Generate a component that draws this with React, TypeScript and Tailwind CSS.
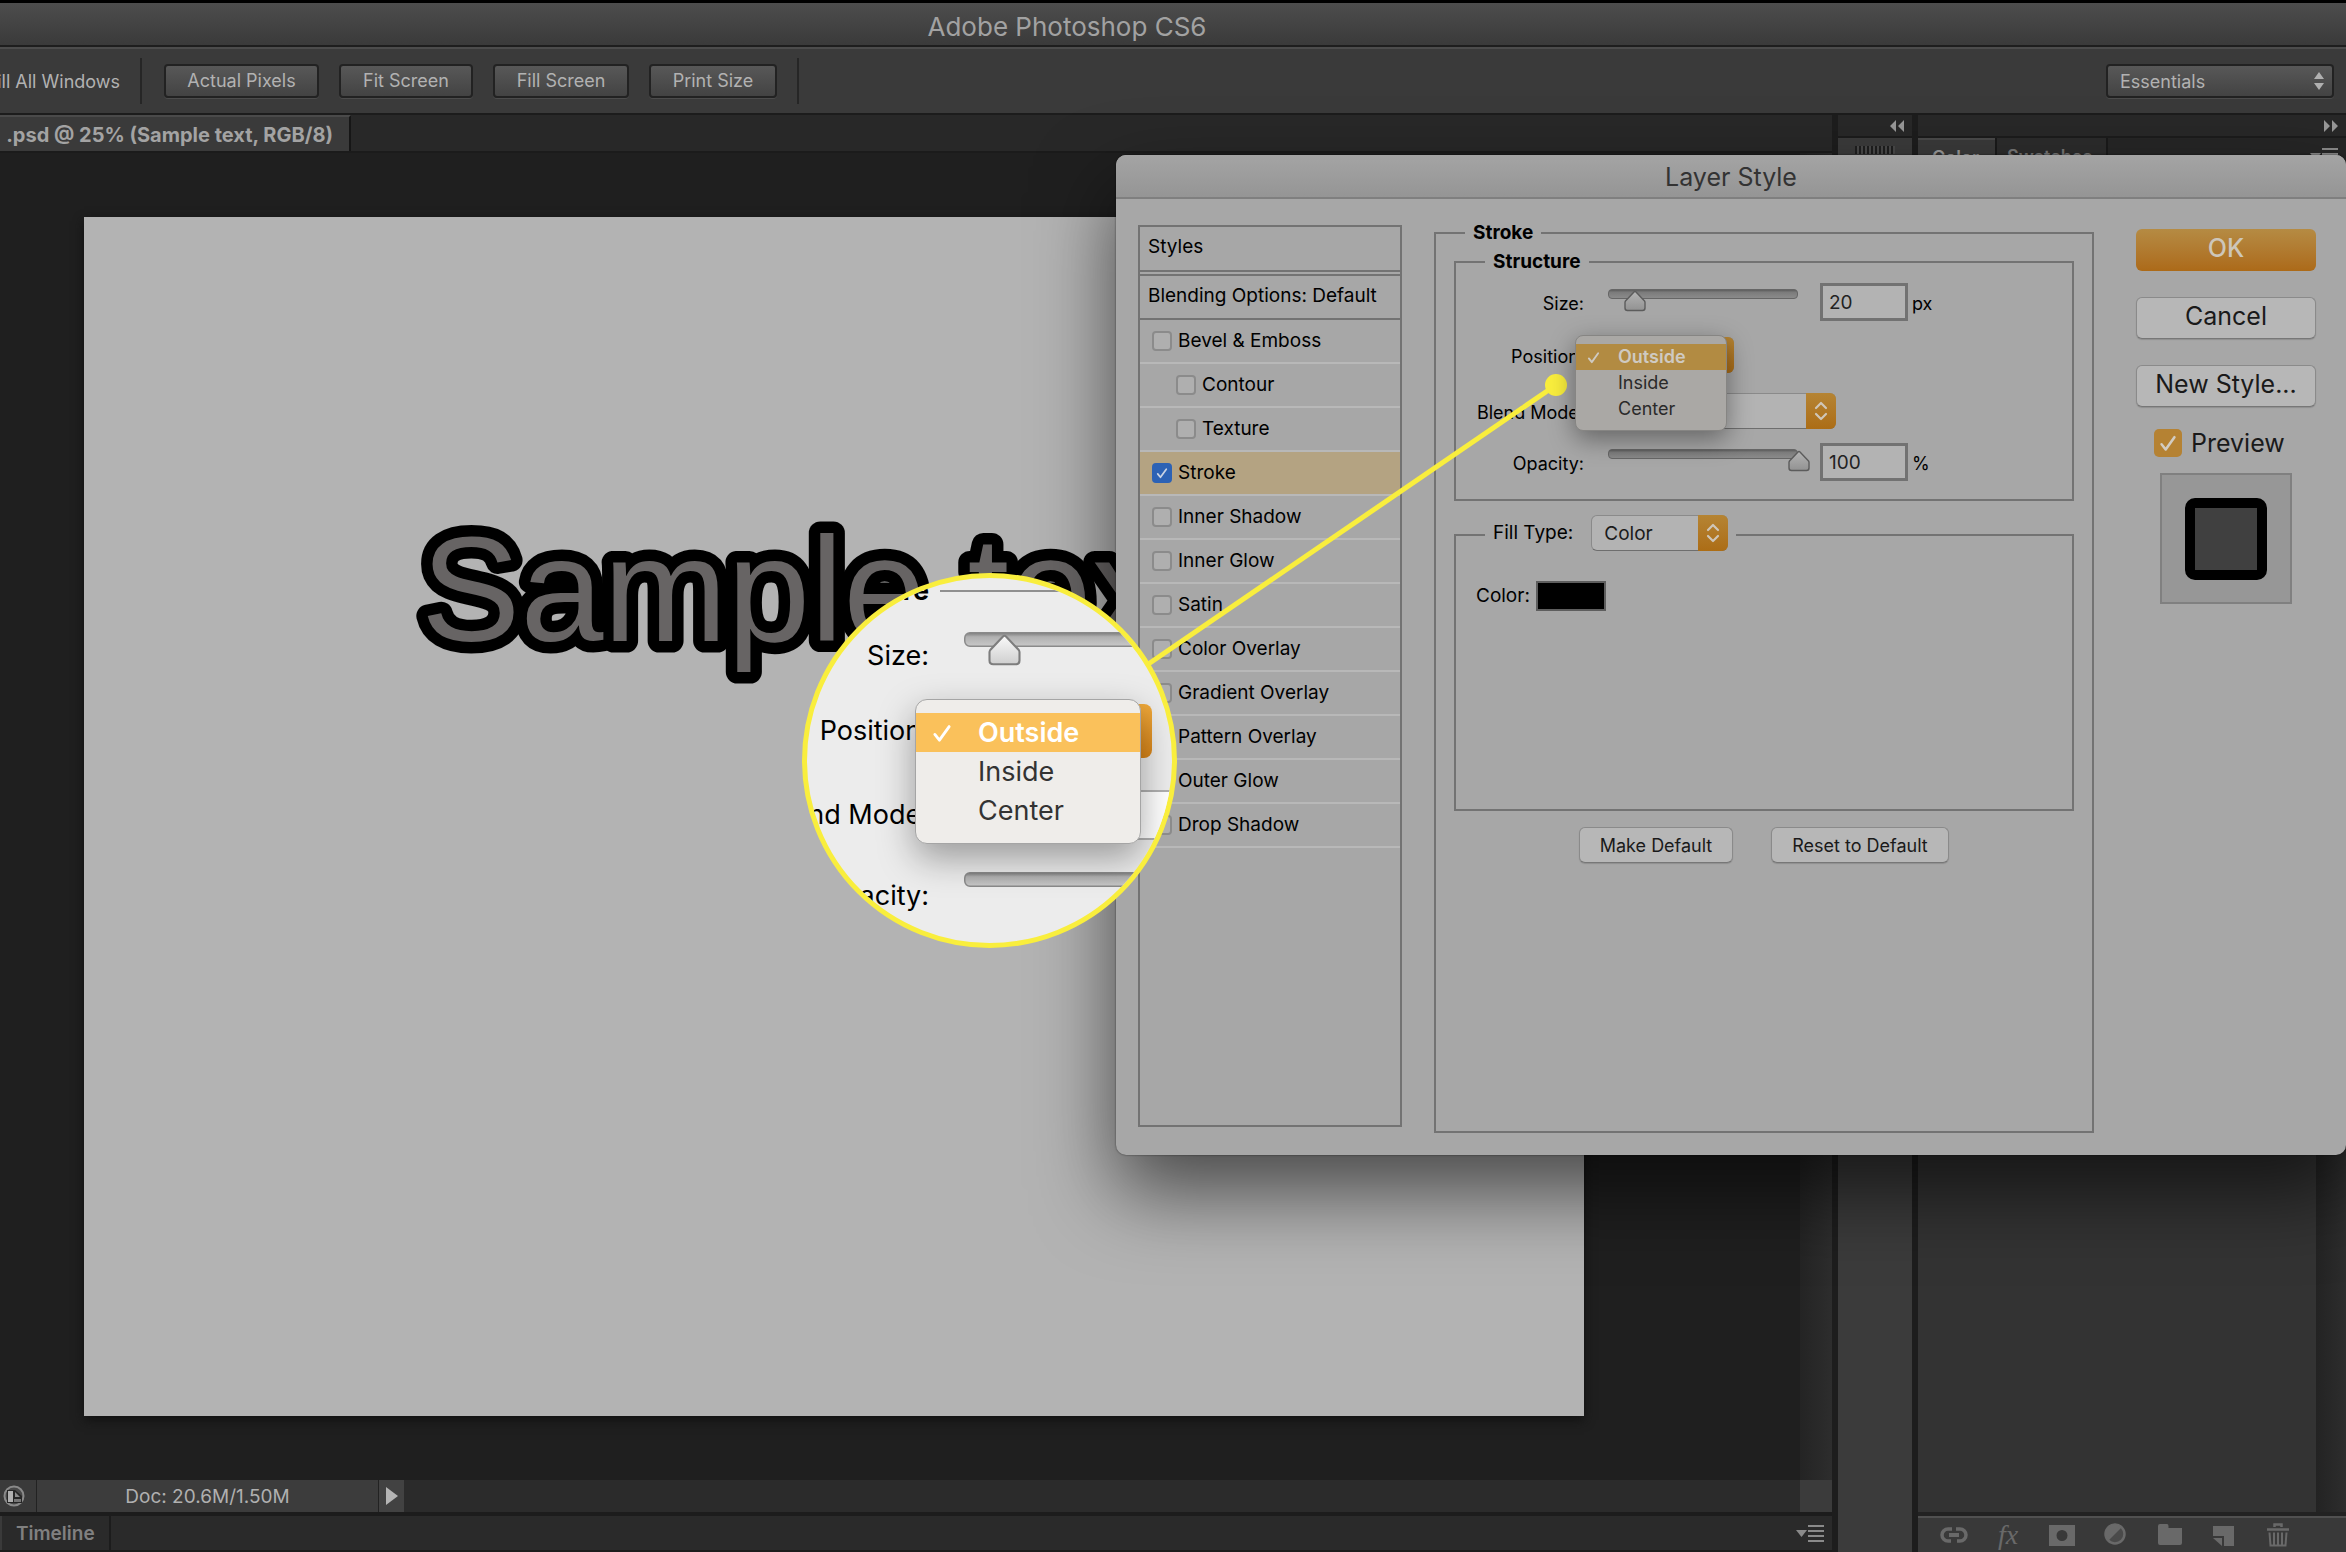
import { ComponentProps, ReactNode, useState } from "react";
import clsx from "clsx";

const VIEW_BUTTONS = ["Actual Pixels", "Fit Screen", "Fill Screen", "Print Size"];

const STYLES = [
  { label: "Bevel & Emboss" },
  { label: "Contour", nested: true },
  { label: "Texture", nested: true },
  { label: "Stroke", checked: true },
  { label: "Inner Shadow" },
  { label: "Inner Glow" },
  { label: "Satin" },
  { label: "Color Overlay" },
  { label: "Gradient Overlay" },
  { label: "Pattern Overlay" },
  { label: "Outer Glow" },
  { label: "Drop Shadow" },
];

const POSITIONS = ["Outside", "Inside", "Center"];

const Check = ({ className }: { className?: string }) => (
  <svg
    viewBox="0 0 14 14"
    className={className}
    fill="none"
    stroke="currentColor"
    strokeWidth="2"
    strokeLinecap="round"
    strokeLinejoin="round"
  >
    <path d="M2 8l3.2 4L12 2.5" />
  </svg>
);

const DarkButton = ({ children, ...props }: ComponentProps<"button">) => (
  <button
    className="h-[34px] rounded-[4px] border-2 border-[#222] bg-linear-to-b from-[#585858] to-[#434343] text-[18px] leading-[30px] text-[#b2b2b2] shadow-[0_1px_0_#4c4c4c]"
    {...props}
  >
    {children}
  </button>
);

const LightButton = ({
  className,
  children,
}: {
  className?: string;
  children: ReactNode;
}) => (
  <button
    className={clsx(
      "rounded-[6px] border border-[#8a8a8a] border-b-[#777] bg-[#b7b7b7] text-[#1a1a1a] shadow-[0_1px_1px_#8f8f8f]",
      className,
    )}
  >
    {children}
  </button>
);

type SliderProps = {
  id: string;
  value: number;
  thumb: number;
  bright?: boolean;
  className?: string;
};

const Slider = ({ id, value, thumb, bright, className }: SliderProps) => (
  <div className={clsx("relative shrink-0", className)}>
    <svg viewBox="0 0 202 24" className="block size-full">
      <defs>
        <linearGradient id={`${id}-track`} x1="0" x2="0" y1="0" y2="1">
          <stop offset="0" stopColor={bright ? "#7c7c7c" : "#555"} />
          <stop offset="0.3" stopColor={bright ? "#b0b0b0" : "#7b7b7b"} />
          <stop offset="1" stopColor={bright ? "#c8c8c8" : "#8c8c8c"} />
        </linearGradient>
        <linearGradient id={`${id}-thumb`} x1="0" x2="0" y1="0" y2="1">
          <stop offset="0" stopColor={bright ? "#fafafa" : "#b4b4b4"} />
          <stop offset="1" stopColor={bright ? "#cfcfcf" : "#929292"} />
        </linearGradient>
      </defs>
      <rect
        x="0.5"
        y="0.5"
        width="189"
        height="9"
        rx="3.5"
        fill={`url(#${id}-track)`}
        stroke={bright ? "#8a8a8a" : "#666"}
      />
      <g transform={`translate(${thumb} 0)`}>
        <path
          d="M-1 3 L-9.5 12 Q-10 12.700 -10 13.500 V19 Q-10 21.500 -7.500 21.500 H7.500 Q10 21.500 10 19 V13.500 Q10 12.700 9.500 12 L1 3 Q0 2 -1 3 Z"
          fill={`url(#${id}-thumb)`}
          stroke={bright ? "#7d7d7d" : "#5c5c5c"}
          strokeWidth="1.4"
        />
      </g>
    </svg>
    <input
      id={id}
      type="range"
      defaultValue={value}
      className="absolute inset-0 size-full opacity-0"
    />
  </div>
);

const Select = ({
  className,
  children,
  ...props
}: ComponentProps<"select">) => (
  <div className={clsx("relative h-9 shrink-0", className)}>
    <select
      className="size-full appearance-none rounded-[6px] border border-[#8a8a8a] border-b-[#6e6e6e] bg-[#b3b3b3] pt-[2px] pl-3 text-[19px] text-[#1a1a1a]"
      {...props}
    >
      {children}
    </select>
    <div className="pointer-events-none absolute inset-y-0 right-0 flex w-[30px] items-center justify-center rounded-r-[6px] bg-linear-to-b from-[#b58433] to-[#ac6d15] text-[#cfc6b8]">
      <svg
        viewBox="0 0 16 22"
        className="h-[22px] w-4"
        fill="none"
        stroke="currentColor"
        strokeWidth="2.200"
        strokeLinecap="round"
        strokeLinejoin="round"
      >
        <path d="M3 8l5-5 5 5M3 14l5 5 5-5" />
      </svg>
    </div>
  </div>
);

const NumberField = ({ id, value }: { id: string; value: string }) => (
  <input
    id={id}
    aria-label={id}
    defaultValue={value}
    className="ml-[10px] h-[38px] w-[88px] border-3 border-[#727272] bg-[#b3b3b3] px-[6px] text-[19px] text-[#222]"
  />
);

const FieldLabel = ({
  htmlFor,
  children,
}: {
  htmlFor: string;
  children: ReactNode;
}) => (
  <label
    htmlFor={htmlFor}
    className="w-[128px] shrink-0 pt-1 text-right text-[18px] leading-6 whitespace-nowrap"
  >
    {children}
  </label>
);

const UnitLabel = ({
  htmlFor,
  children,
}: {
  htmlFor: string;
  children: ReactNode;
}) => (
  <label htmlFor={htmlFor} className="ml-1 pt-1 text-[18px] leading-6">
    {children}
  </label>
);

const PositionMenu = ({ large }: { large?: boolean }) => {
  const [selected, setSelected] = useState("Outside");
  return (
    <ul
      role="listbox"
      aria-label="Position"
      className={clsx(
        "absolute border",
        large
          ? "top-[121px] left-[108px] w-[226px] rounded-[12px] border-[#a5a5a5] bg-[#efedea] py-[13px] text-[27px] leading-[39px] text-[#333] shadow-[0_14px_36px_rgba(0,0,0,0.35)]"
          : "top-[-2px] left-[119px] w-[152px] rounded-[8px] border-[#868583] bg-[#aaa8a5] py-2 text-[18px] leading-[26px] text-[#2a2a2a] shadow-[0_8px_26px_rgba(0,0,0,0.4)]",
      )}
    >
      {POSITIONS.map((item) => (
        <li
          key={item}
          role="option"
          aria-selected={item === selected}
          onClick={() => setSelected(item)}
          className={clsx(
            "relative",
            large ? "pl-[62px]" : "pl-[42px]",
            item === selected && "font-semibold",
            item === selected &&
              (large ? "bg-[#fac15b] text-white" : "bg-[#b28b42] text-[#cfcac2]"),
          )}
        >
          {item === selected && (
            <Check
              className={clsx(
                "absolute",
                large ? "top-[10px] left-4 size-5" : "top-[7px] left-[11px] size-[13px]",
              )}
            />
          )}
          {item}
        </li>
      ))}
    </ul>
  );
};

const StyleList = () => (
  <div className="mt-1 mb-[6px] w-[264px] shrink-0 border-2 border-[#737373] text-[19px]">
    <div className="flex h-[45px] items-center border-b-2 border-[#737373] px-2 pb-[2px]">
      Styles
    </div>
    <div className="mt-[2px] flex h-[46px] items-center border-y-2 border-[#737373] px-2 pb-[2px] whitespace-nowrap">
      Blending Options: Default
    </div>
    {STYLES.map((style) => (
      <label
        key={style.label}
        className={clsx(
          "flex h-[44px] items-center gap-[6px] border-b-2 border-[#b8b8b8]",
          style.nested ? "pl-9" : "pl-3",
          style.checked && "bg-[#b4a382]",
        )}
      >
        <span className="relative size-5">
          <input
            type="checkbox"
            defaultChecked={style.checked}
            className="block size-5 appearance-none rounded-[4px] border-2 border-[#8b8b8b] bg-[#afafaf] checked:border-[#2c62b5] checked:bg-[#2c62b5]"
          />
          {style.checked && (
            <Check className="pointer-events-none absolute top-1 left-1 size-3 text-[#c9d3e4]" />
          )}
        </span>
        {style.label}
      </label>
    ))}
  </div>
);

const StrokeSettings = () => (
  <fieldset className="ml-8 min-w-0 flex-1 border-2 border-[#737373] px-[18px]">
    <legend className="ml-[11px] px-2 text-[19px] leading-6 font-bold">
      Stroke
    </legend>
    <fieldset className="mt-[5px] border-2 border-[#737373] pt-[9px] pb-[18px]">
      <legend className="ml-[29px] px-2 text-[19px] leading-6 font-bold">
        Structure
      </legend>
      <div className="flex items-center">
        <FieldLabel htmlFor="size">Size:</FieldLabel>
        <Slider
          id="size"
          value={20}
          thumb={27}
          className="mb-[2px] ml-6 h-6 w-[202px]"
        />
        <NumberField id="size-value" value="20" />
        <UnitLabel htmlFor="size-value">px</UnitLabel>
      </div>
      <div className="relative mt-4 flex items-center">
        <FieldLabel htmlFor="position">Position:</FieldLabel>
        <Select id="position" className="ml-2 w-[142px]">
          <option>Outside</option>
        </Select>
        <div className="absolute inset-0 z-10">
          <PositionMenu />
        </div>
      </div>
      <div className="mt-5 flex items-center">
        <FieldLabel htmlFor="blend">Blend Mode:</FieldLabel>
        <Select id="blend" className="ml-2 w-[244px]">
          <option>Normal</option>
        </Select>
      </div>
      <div className="mt-[14px] flex items-center">
        <FieldLabel htmlFor="opacity">Opacity:</FieldLabel>
        <Slider
          id="opacity"
          value={100}
          thumb={191}
          className="mb-[2px] ml-6 h-6 w-[202px]"
        />
        <NumberField id="opacity-value" value="100" />
        <UnitLabel htmlFor="opacity-value">%</UnitLabel>
      </div>
    </fieldset>
    <fieldset className="mt-[14px] h-[296px] border-2 border-[#737373] pt-[26px]">
      <legend className="ml-[29px] flex items-center px-2 pb-1 text-[19px]">
        <label htmlFor="fill">Fill Type:</label>
        <Select id="fill" className="ml-[18px] w-[137px]">
          <option>Color</option>
        </Select>
      </legend>
      <div className="flex h-[30px] items-center pl-5 text-[19px]">
        <span>Color:</span>
        <button
          aria-label="Stroke color"
          className="ml-[6px] h-[30px] w-[70px] border-2 border-[#5e5e5e] bg-black"
        />
      </div>
    </fieldset>
    <div className="mt-4 flex justify-center gap-[38px]">
      <LightButton className="h-9 w-[154px] text-[18px]">
        Make Default
      </LightButton>
      <LightButton className="h-9 w-[178px] text-[18px]">
        Reset to Default
      </LightButton>
    </div>
  </fieldset>
);

const LayerStyleDialog = () => (
  <section
    aria-label="Layer Style"
    className="absolute top-[155px] right-0 flex h-[1000px] w-[1230px] flex-col rounded-[10px] bg-[#a7a7a7] text-black shadow-[0_0_2px_rgba(0,0,0,0.6),0_36px_80px_rgba(0,0,0,0.6)]"
  >
    <h2 className="flex h-11 shrink-0 items-center justify-center rounded-t-[10px] border-b-2 border-[#7f7f7f] bg-linear-to-b from-[#a4a4a4] to-[#959595] pt-1 text-[25px] text-[#333]">
      Layer Style
    </h2>
    <div className="flex flex-1 pt-[22px] pr-[30px] pb-[22px] pl-[22px]">
      <StyleList />
      <StrokeSettings />
      <div className="mt-2 ml-[42px] flex w-[180px] shrink-0 flex-col items-center">
        <button className="h-[42px] w-full rounded-[6px] bg-linear-to-b from-[#b58b43] to-[#ac6a18] pb-[2px] text-[25px] font-medium text-[#cdc6ba]">
          OK
        </button>
        <LightButton className="mt-[26px] h-[42px] w-full pb-1 text-[25px]">
          Cancel
        </LightButton>
        <LightButton className="mt-[26px] h-[42px] w-full pb-1 text-[25px]">
          New Style...
        </LightButton>
        <label className="mt-5 ml-[18px] flex items-center gap-[9px] self-start text-[25px] leading-8 text-[#1a1a1a]">
          <span className="relative size-7">
            <input
              type="checkbox"
              defaultChecked
              className="block size-7 appearance-none rounded-[5px] bg-[#b58233]"
            />
            <Check className="pointer-events-none absolute top-[5px] left-[5px] size-[18px] text-[#d2ccc2]" />
          </span>
          Preview
        </label>
        <div className="mt-[14px] flex h-[131px] w-[132px] items-center justify-center border-2 border-[#808080] bg-[#979797]">
          <div className="size-[82px] rounded-[10px] border-10 border-black bg-[#404040]" />
        </div>
      </div>
    </div>
  </section>
);

const LensLabel = ({ children }: { children: ReactNode }) => (
  <span className="flex w-[122px] shrink-0 justify-end text-[27px] whitespace-nowrap">
    {children}
  </span>
);

// Magnified view of the position menu, tied to it by the yellow line
const Lens = () => (
  <div className="absolute top-[573px] left-[802px] size-[375px] overflow-hidden rounded-full border-5 border-[#f9ee3d] bg-[#ececec] text-black">
    <div className="flex h-[26px] items-center font-bold">
      <LensLabel>Structure</LensLabel>
      <span className="ml-[11px] h-[2px] flex-1 bg-[#8f8f8f]" />
    </div>
    <div className="mt-[30px] flex h-[44px] items-center">
      <LensLabel>Size:</LensLabel>
      <Slider
        id="lens-size"
        value={20}
        thumb={27}
        bright
        className="mb-3 ml-[35px] h-[36px] w-[303px]"
      />
    </div>
    <div className="mt-[26px] flex h-[54px] items-center">
      <LensLabel>Position:</LensLabel>
      <span className="ml-3 h-full w-[211px] rounded-[8px] bg-linear-to-b from-[#f0a93a] to-[#d98518]" />
    </div>
    <div className="mt-8 flex h-[50px] items-center">
      <LensLabel>Blend Mode:</LensLabel>
      <span className="ml-3 h-full w-[360px] shrink-0 rounded-[8px] border-2 border-[#b0b0b0] bg-white" />
    </div>
    <div className="mt-[30px] flex h-[52px] items-center">
      <LensLabel>Opacity:</LensLabel>
      <Slider
        id="lens-opacity"
        value={100}
        thumb={191}
        bright
        className="mb-3 ml-[35px] h-[36px] w-[303px]"
      />
    </div>
    <PositionMenu large />
  </div>
);

const MenuGlyph = () => (
  <svg viewBox="0 0 28 18" className="h-[18px] w-7" fill="#8a8a8a">
    <path d="M0 6h11l-5.500 7z" />
    <path d="M12 1h16v2H12zM12 6h16v2H12zM12 11h16v2H12zM12 16h16v2H12z" />
  </svg>
);

const LayerIcons = () => (
  <div className="flex h-9 shrink-0 items-center gap-[26px] border-t-2 border-[#505050] bg-[#393939] pl-[22px] text-[#696969]">
    <button aria-label="Link layers">
      <svg viewBox="0 0 28 24" className="h-6 w-7" fill="none" stroke="currentColor" strokeWidth="3.500">
        <path d="M12 6H8a6 6 0 000 12h3M16 6h4a6 6 0 010 12h-3" />
        <path d="M9 12h10" strokeWidth="4" />
      </svg>
    </button>
    <button
      aria-label="Layer style"
      className="w-7 font-['Liberation_Serif',serif] text-[28px] leading-6 italic"
    >
      fx
    </button>
    <button aria-label="Add mask">
      <svg viewBox="0 0 28 24" className="h-6 w-7" fill="currentColor" fillRule="evenodd">
        <path d="M1 2h26v21H1zM14 7a5.500 5.500 0 100 11 5.500 5.500 0 000-11z" />
      </svg>
    </button>
    <button aria-label="Adjustment layer">
      <svg viewBox="0 0 28 24" className="h-6 w-7">
        <circle cx="13" cy="11" r="9.500" fill="#4a4a4a" stroke="currentColor" strokeWidth="2.500" />
        <path d="M20 4A9.900 9.900 0 106 18z" fill="currentColor" />
      </svg>
    </button>
    <button aria-label="New group">
      <svg viewBox="0 0 28 24" className="h-6 w-7" fill="currentColor">
        <path d="M2 3q0-2 2-2h7q1.500 0 1.500 2v2H26v15q0 2-2 2H4q-2 0-2-2z" />
      </svg>
    </button>
    <button aria-label="New layer">
      <svg viewBox="0 0 28 24" className="h-6 w-7" fill="currentColor">
        <path d="M3 3h21v20H14V13H3z" />
        <path d="M3 15h9v8z" />
      </svg>
    </button>
    <button aria-label="Delete layer">
      <svg viewBox="0 0 28 24" className="h-6 w-7" fill="none" stroke="currentColor" strokeWidth="2">
        <path d="M10.500 4V1.500h7V4M3 6.500h22" strokeWidth="2.500" />
        <path d="M5.500 9.500l1 13h15l1-13M10 9.500v13M14 9.500v13M18 9.500v13" />
      </svg>
    </button>
  </div>
);

const Workspace = () => (
  <main className="flex min-w-0 flex-1 flex-col">
    <div className="flex h-[38px] shrink-0 border-b-2 border-[#1b1b1b] bg-[#282828]">
      <div className="flex w-[351px] items-center justify-end border-t-2 border-r-2 border-t-[#4a4a4a] border-r-[#161616] bg-[#3a3a3a] pt-[2px] pr-4 text-[20px] font-bold whitespace-nowrap text-[#a3a3a3]">
        .psd @ 25% (Sample text, RGB/8)
      </div>
    </div>
    <div className="flex flex-1">
      <div className="flex-1 pt-16 pl-[84px]">
        <div className="h-[1199px] w-[1500px] bg-[#b3b3b3] shadow-[0_4px_10px_#111]">
          <svg viewBox="0 0 1500 1199" className="size-full">
            <text
              x="337"
              y="424"
              fontFamily="Liberation Sans, Arial, sans-serif"
              fontSize="149"
              fill="#676464"
              stroke="#000"
              strokeWidth="23"
              strokeLinejoin="round"
              paintOrder="stroke"
            >
              Sample text
            </text>
          </svg>
        </div>
      </div>
      <div className="w-8 bg-linear-to-r from-[#242424] to-[#2d2d2d]" />
    </div>
    <div className="flex h-8 shrink-0 bg-[#2b2b2b] text-[19px] text-[#b0b0b0]">
      <div className="flex w-[37px] items-center border-r border-[#222] bg-[#3a3a3a] pl-[3px]">
        <svg viewBox="0 0 22 22" className="size-[22px]">
          <circle cx="11" cy="11" r="9.500" fill="#484848" stroke="#8a8a8a" strokeWidth="2" />
          <path d="M4 5h8l7 6v7H4z" fill="#262626" />
          <path d="M5 6h5v11H5z" fill="#b0b0b0" />
          <path d="M12 7v5h5z" fill="#8a8a8a" />
          <path d="M11 14h7v3h-7z" fill="#777" />
        </svg>
      </div>
      <div className="flex w-[342px] items-center justify-center border-r border-[#222] bg-[#3c3c3c] pt-[2px]">
        Doc: 20.6M/1.50M
      </div>
      <button
        aria-label="Status menu"
        className="flex w-[25px] items-center justify-center bg-[#424242]"
      >
        <svg viewBox="0 0 12 18" className="h-[18px] w-3" fill="#b5b5b5">
          <path d="M0 0l12 9-12 9z" />
        </svg>
      </button>
      <div className="ml-auto w-8 bg-[#3b3b3b]" />
    </div>
    <div className="flex h-10 shrink-0 items-stretch justify-between border-t-4 border-b-2 border-[#1c1c1c] bg-[#2a2a2a]">
      <div className="flex items-center border-r-2 border-l-2 border-[#1c1c1c] border-l-[#3a3a3a] px-[14px] pt-[2px] text-[19px] font-semibold text-[#808080]">
        Timeline
      </div>
      <button aria-label="Panel menu" className="mr-2">
        <MenuGlyph />
      </button>
    </div>
  </main>
);

const Docks = () => (
  <>
    <div className="flex w-[82px] shrink-0 flex-col border-r-2 border-l-6 border-[#1d1d1d] bg-[#3b3b3b]">
      <div className="flex h-[23px] shrink-0 items-center justify-end border-b-2 border-[#1c1c1c] bg-[#282828] pr-2">
        <svg viewBox="0 0 14 12" className="h-3 w-[14px]" fill="#999">
          <path d="M6 0v12L0 6zM14 0v12L8 6z" />
        </svg>
      </div>
      <div className="mx-auto mt-2 h-2 w-10 bg-[repeating-linear-gradient(90deg,#1f1f1f_0_2px,#4a4a4a_2px_4px)]" />
    </div>
    <aside className="flex w-[432px] shrink-0 flex-col border-l-4 border-[#1d1d1d] bg-[#333]">
      <div className="flex h-[23px] shrink-0 items-center justify-end border-b-2 border-[#1c1c1c] bg-[#282828] pr-2">
        <svg viewBox="0 0 14 12" className="h-3 w-[14px]" fill="#999">
          <path d="M0 0v12l6-6zM8 0v12l6-6z" />
        </svg>
      </div>
      <div className="flex h-9 shrink-0 items-center bg-[#262626] text-[18px] font-semibold">
        <div className="flex h-full w-[77px] items-center border-t-2 border-[#4a4a4a] bg-[#3a3a3a] pl-[14px] text-[#9a9a9a]">
          Color
        </div>
        <div className="flex h-full w-[113px] items-center border-r-2 border-l-2 border-[#1a1a1a] bg-[#2c2c2c] pl-[10px] text-[#777]">
          Swatches
        </div>
        <div className="mr-2 ml-auto">
          <MenuGlyph />
        </div>
      </div>
      <div className="flex flex-1 justify-end border-b-4 border-[#222]">
        <div className="w-[30px] bg-linear-to-r from-[#232323] to-[#2d2d2d]" />
      </div>
      <LayerIcons />
    </aside>
  </>
);

export default function App() {
  return (
    <div className="relative flex min-h-screen flex-col overflow-hidden bg-[#1f1f1f] font-['Inter',sans-serif] leading-normal">
      <h1 className="flex h-[47px] shrink-0 items-center justify-center border-t-3 border-b-2 border-t-black border-b-[#1e1e1e] bg-linear-to-b from-[#4d4d4d] to-[#3a3a3a] pt-1 pr-[212px] text-[26px] text-[#a2a2a2]">
        Adobe Photoshop CS6
      </h1>
      <header className="flex h-[68px] shrink-0 items-center border-t-2 border-b-2 border-t-[#4c4c4c] border-b-[#1c1c1c] bg-[#3a3a3a] text-[18px] text-[#b2b2b2]">
        <div className="flex h-[46px] w-[142px] items-center justify-end border-r-2 border-[#262626] pr-5 whitespace-nowrap">
          Fill All Windows
        </div>
        <div className="mr-5 ml-[22px] grid grid-cols-[155px_134px_136px_128px] gap-5">
          {VIEW_BUTTONS.map((label) => (
            <DarkButton key={label}>{label}</DarkButton>
          ))}
        </div>
        <div className="h-[46px] w-[2px] bg-[#262626]" />
        <div className="relative mr-3 ml-auto">
          <select
            aria-label="Workspace"
            className="block h-[34px] w-[228px] appearance-none rounded-[4px] border-2 border-[#222] bg-linear-to-b from-[#585858] to-[#434343] pl-3 shadow-[0_1px_0_#4c4c4c]"
          >
            <option>Essentials</option>
          </select>
          <svg
            viewBox="0 0 10 18"
            className="pointer-events-none absolute top-2 right-[10px] h-[18px] w-[10px]"
            fill="#b0b0b0"
          >
            <path d="M0 7l5-7 5 7zM0 11l5 7 5-7z" />
          </svg>
        </div>
      </header>
      <div className="flex flex-1">
        <Workspace />
        <Docks />
      </div>

      <LayerStyleDialog />

      <svg
        viewBox="0 0 430 300"
        className="pointer-events-none absolute top-[373px] left-[1140px] h-[300px] w-[430px]"
      >
        <path d="M4 294L416 12" stroke="#f9ee3d" strokeWidth="5" />
        <circle cx="416" cy="12" r="11" fill="#f9ee3d" />
      </svg>
      <Lens />
    </div>
  );
}
